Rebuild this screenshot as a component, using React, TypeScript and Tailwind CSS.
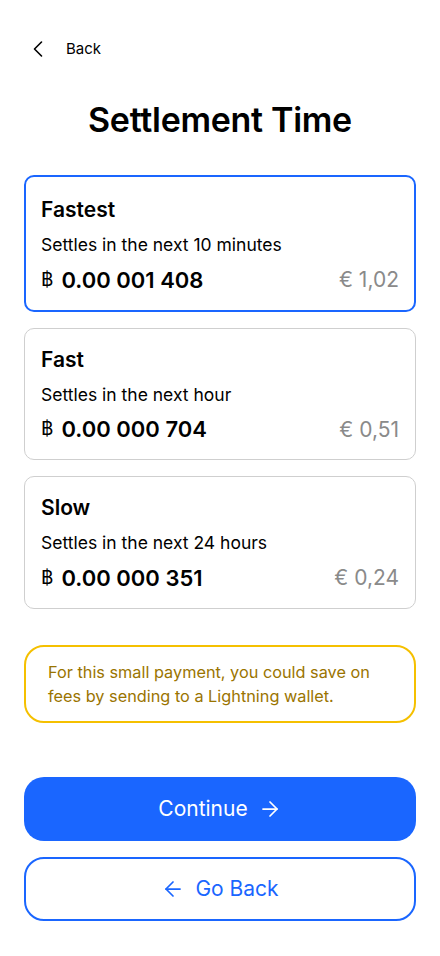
import { ArrowLeft, ArrowRight, ChevronLeft } from "lucide-react";

const options = [
  { title: "Fastest", desc: "Settles in the next 10 minutes", btc: "0.00 001 408", eur: "€ 1,02", selected: true },
  { title: "Fast", desc: "Settles in the next hour", btc: "0.00 000 704", eur: "€ 0,51", selected: false },
  { title: "Slow", desc: "Settles in the next 24 hours", btc: "0.00 000 351", eur: "€ 0,24", selected: false },
];

export default function App() {
  return (
    <div
      className="min-h-[956px] w-[440px] bg-white px-6 text-black"
      style={{ fontFamily: "Inter, 'Noto Sans', sans-serif" }}
    >
      {/* header */}
      <div className="flex h-[96px] items-start pt-[35px]">
        <button className="flex items-center gap-[14px] text-[15px]">
          <ChevronLeft size={28} strokeWidth={1.4} />
          <span>Back</span>
        </button>
      </div>

      <h1 className="text-center text-[34px] font-semibold leading-[48px] tracking-[-0.3px]">Settlement Time</h1>

      <div className="mt-[31px] flex flex-col gap-[16px]">
        {options.map((o) => (
          <div
            key={o.title}
            className={
              o.selected
                ? "rounded-[10px] border-2 border-[#1a66ff] px-[15px] pb-[14px] pt-[18px]"
                : "rounded-[10px] border border-[#cfcfcf] px-[16px] pb-[14px] pt-[16px]"
            }
          >
            <div className="text-[21px] font-semibold leading-[30px]">{o.title}</div>
            <div className="mt-[8px] text-[17.5px] leading-[24px]">{o.desc}</div>
            <div className="mt-[7px] flex items-center justify-between">
              <div className="flex items-center gap-[8px]">
                <span className="text-[19px]">฿</span>
                <span className="text-[22px] font-semibold leading-[30px]">{o.btc}</span>
              </div>
              <span className="text-[21px] text-[#8a8a8a]">{o.eur}</span>
            </div>
          </div>
        ))}
      </div>

      <div className="mt-[36px] rounded-[20px] border-2 border-[#f5c000] py-[13px] pl-[22px] pr-[40px] text-[16.3px] leading-[24px] text-[#9a7400]">
        For this small payment, you could save on fees by sending to a Lightning wallet.
      </div>

      <div className="mt-[54px] flex flex-col gap-[16px]">
        <button className="flex h-[64px] items-center justify-center gap-[10px] rounded-[20px] bg-[#1a66ff] text-[21px] text-white">
          Continue
          <ArrowRight size={24} strokeWidth={1.75} />
        </button>
        <button className="flex h-[64px] items-center justify-center gap-[10px] rounded-[20px] border-2 border-[#1a66ff] text-[21px] text-[#1a66ff]">
          <ArrowLeft size={24} strokeWidth={1.75} />
          Go Back
        </button>
      </div>
    </div>
  );
}
